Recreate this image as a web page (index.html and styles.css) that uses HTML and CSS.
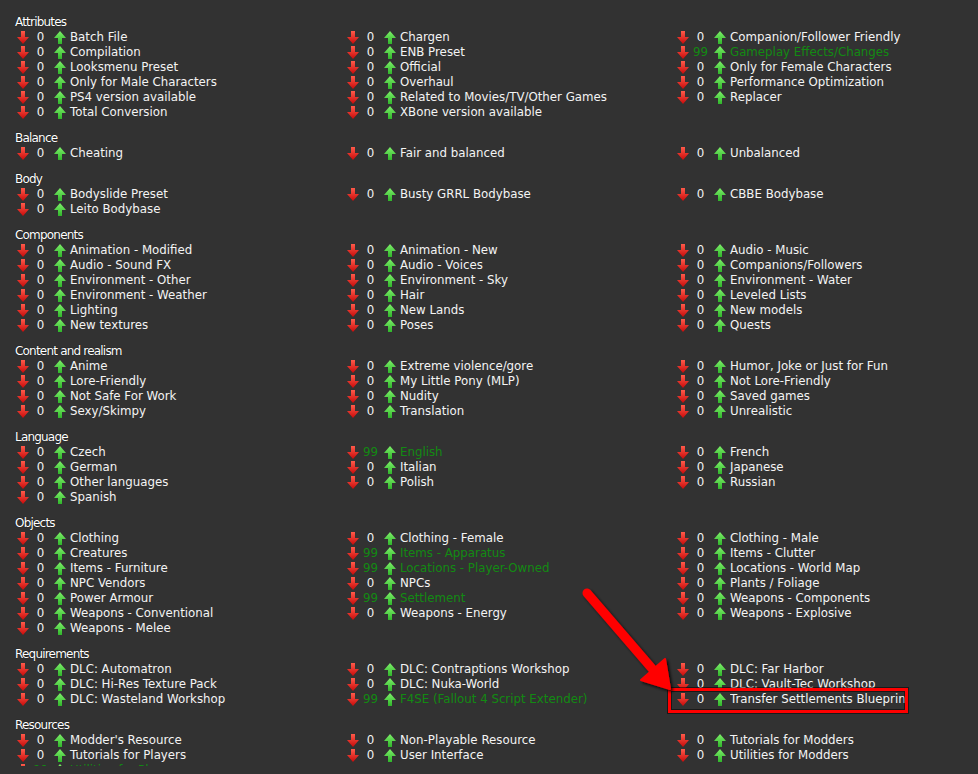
FILE: index.html
```html
<!DOCTYPE html>
<html>
<head>
<meta charset="utf-8">
<link rel="stylesheet" href="styles.css">
</head>
<body>
<svg class="defs" width="0" height="0">
  <defs>
    <linearGradient id="gd" x1="0" y1="0" x2="0" y2="1">
      <stop offset="0" stop-color="#ff5a4a"/>
      <stop offset="1" stop-color="#c80a0a"/>
    </linearGradient>
    <linearGradient id="gu" x1="0" y1="0" x2="0" y2="1">
      <stop offset="0" stop-color="#7ef06a"/>
      <stop offset="1" stop-color="#2fb52a"/>
    </linearGradient>
    <symbol id="down" viewBox="0 0 12 13">
      <path d="M4 0h4v6h4l-6 7l-6-7h4z" fill="url(#gd)"/>
    </symbol>
    <symbol id="up" viewBox="0 0 12 13">
      <path d="M6 0l6 7h-4v6h-4v-6h-4z" fill="url(#gu)"/>
    </symbol>
  </defs>
</svg>
<div class="page">

<section class="group">
  <h3 class="title">Attributes</h3>
  <div class="cols">
    <ul class="col">
      <li class="tag"><svg class="dn"><use href="#down"/></svg><span class="cnt">0</span><svg class="upi"><use href="#up"/></svg><span class="name">Batch File</span></li>
      <li class="tag"><svg class="dn"><use href="#down"/></svg><span class="cnt">0</span><svg class="upi"><use href="#up"/></svg><span class="name">Compilation</span></li>
      <li class="tag"><svg class="dn"><use href="#down"/></svg><span class="cnt">0</span><svg class="upi"><use href="#up"/></svg><span class="name">Looksmenu Preset</span></li>
      <li class="tag"><svg class="dn"><use href="#down"/></svg><span class="cnt">0</span><svg class="upi"><use href="#up"/></svg><span class="name">Only for Male Characters</span></li>
      <li class="tag"><svg class="dn"><use href="#down"/></svg><span class="cnt">0</span><svg class="upi"><use href="#up"/></svg><span class="name">PS4 version available</span></li>
      <li class="tag"><svg class="dn"><use href="#down"/></svg><span class="cnt">0</span><svg class="upi"><use href="#up"/></svg><span class="name">Total Conversion</span></li>
    </ul>
    <ul class="col">
      <li class="tag"><svg class="dn"><use href="#down"/></svg><span class="cnt">0</span><svg class="upi"><use href="#up"/></svg><span class="name">Chargen</span></li>
      <li class="tag"><svg class="dn"><use href="#down"/></svg><span class="cnt">0</span><svg class="upi"><use href="#up"/></svg><span class="name">ENB Preset</span></li>
      <li class="tag"><svg class="dn"><use href="#down"/></svg><span class="cnt">0</span><svg class="upi"><use href="#up"/></svg><span class="name">Official</span></li>
      <li class="tag"><svg class="dn"><use href="#down"/></svg><span class="cnt">0</span><svg class="upi"><use href="#up"/></svg><span class="name">Overhaul</span></li>
      <li class="tag"><svg class="dn"><use href="#down"/></svg><span class="cnt">0</span><svg class="upi"><use href="#up"/></svg><span class="name">Related to Movies/TV/Other Games</span></li>
      <li class="tag"><svg class="dn"><use href="#down"/></svg><span class="cnt">0</span><svg class="upi"><use href="#up"/></svg><span class="name">XBone version available</span></li>
    </ul>
    <ul class="col">
      <li class="tag"><svg class="dn"><use href="#down"/></svg><span class="cnt">0</span><svg class="upi"><use href="#up"/></svg><span class="name">Companion/Follower Friendly</span></li>
      <li class="tag on"><svg class="dn"><use href="#down"/></svg><span class="cnt">99</span><svg class="upi"><use href="#up"/></svg><span class="name">Gameplay Effects/Changes</span></li>
      <li class="tag"><svg class="dn"><use href="#down"/></svg><span class="cnt">0</span><svg class="upi"><use href="#up"/></svg><span class="name">Only for Female Characters</span></li>
      <li class="tag"><svg class="dn"><use href="#down"/></svg><span class="cnt">0</span><svg class="upi"><use href="#up"/></svg><span class="name">Performance Optimization</span></li>
      <li class="tag"><svg class="dn"><use href="#down"/></svg><span class="cnt">0</span><svg class="upi"><use href="#up"/></svg><span class="name">Replacer</span></li>
    </ul>
  </div>
</section>

<section class="group">
  <h3 class="title">Balance</h3>
  <div class="cols">
    <ul class="col">
      <li class="tag"><svg class="dn"><use href="#down"/></svg><span class="cnt">0</span><svg class="upi"><use href="#up"/></svg><span class="name">Cheating</span></li>
    </ul>
    <ul class="col">
      <li class="tag"><svg class="dn"><use href="#down"/></svg><span class="cnt">0</span><svg class="upi"><use href="#up"/></svg><span class="name">Fair and balanced</span></li>
    </ul>
    <ul class="col">
      <li class="tag"><svg class="dn"><use href="#down"/></svg><span class="cnt">0</span><svg class="upi"><use href="#up"/></svg><span class="name">Unbalanced</span></li>
    </ul>
  </div>
</section>

<section class="group">
  <h3 class="title">Body</h3>
  <div class="cols">
    <ul class="col">
      <li class="tag"><svg class="dn"><use href="#down"/></svg><span class="cnt">0</span><svg class="upi"><use href="#up"/></svg><span class="name">Bodyslide Preset</span></li>
      <li class="tag"><svg class="dn"><use href="#down"/></svg><span class="cnt">0</span><svg class="upi"><use href="#up"/></svg><span class="name">Leito Bodybase</span></li>
    </ul>
    <ul class="col">
      <li class="tag"><svg class="dn"><use href="#down"/></svg><span class="cnt">0</span><svg class="upi"><use href="#up"/></svg><span class="name">Busty GRRL Bodybase</span></li>
    </ul>
    <ul class="col">
      <li class="tag"><svg class="dn"><use href="#down"/></svg><span class="cnt">0</span><svg class="upi"><use href="#up"/></svg><span class="name">CBBE Bodybase</span></li>
    </ul>
  </div>
</section>

<section class="group">
  <h3 class="title">Components</h3>
  <div class="cols">
    <ul class="col">
      <li class="tag"><svg class="dn"><use href="#down"/></svg><span class="cnt">0</span><svg class="upi"><use href="#up"/></svg><span class="name">Animation - Modified</span></li>
      <li class="tag"><svg class="dn"><use href="#down"/></svg><span class="cnt">0</span><svg class="upi"><use href="#up"/></svg><span class="name">Audio - Sound FX</span></li>
      <li class="tag"><svg class="dn"><use href="#down"/></svg><span class="cnt">0</span><svg class="upi"><use href="#up"/></svg><span class="name">Environment - Other</span></li>
      <li class="tag"><svg class="dn"><use href="#down"/></svg><span class="cnt">0</span><svg class="upi"><use href="#up"/></svg><span class="name">Environment - Weather</span></li>
      <li class="tag"><svg class="dn"><use href="#down"/></svg><span class="cnt">0</span><svg class="upi"><use href="#up"/></svg><span class="name">Lighting</span></li>
      <li class="tag"><svg class="dn"><use href="#down"/></svg><span class="cnt">0</span><svg class="upi"><use href="#up"/></svg><span class="name">New textures</span></li>
    </ul>
    <ul class="col">
      <li class="tag"><svg class="dn"><use href="#down"/></svg><span class="cnt">0</span><svg class="upi"><use href="#up"/></svg><span class="name">Animation - New</span></li>
      <li class="tag"><svg class="dn"><use href="#down"/></svg><span class="cnt">0</span><svg class="upi"><use href="#up"/></svg><span class="name">Audio - Voices</span></li>
      <li class="tag"><svg class="dn"><use href="#down"/></svg><span class="cnt">0</span><svg class="upi"><use href="#up"/></svg><span class="name">Environment - Sky</span></li>
      <li class="tag"><svg class="dn"><use href="#down"/></svg><span class="cnt">0</span><svg class="upi"><use href="#up"/></svg><span class="name">Hair</span></li>
      <li class="tag"><svg class="dn"><use href="#down"/></svg><span class="cnt">0</span><svg class="upi"><use href="#up"/></svg><span class="name">New Lands</span></li>
      <li class="tag"><svg class="dn"><use href="#down"/></svg><span class="cnt">0</span><svg class="upi"><use href="#up"/></svg><span class="name">Poses</span></li>
    </ul>
    <ul class="col">
      <li class="tag"><svg class="dn"><use href="#down"/></svg><span class="cnt">0</span><svg class="upi"><use href="#up"/></svg><span class="name">Audio - Music</span></li>
      <li class="tag"><svg class="dn"><use href="#down"/></svg><span class="cnt">0</span><svg class="upi"><use href="#up"/></svg><span class="name">Companions/Followers</span></li>
      <li class="tag"><svg class="dn"><use href="#down"/></svg><span class="cnt">0</span><svg class="upi"><use href="#up"/></svg><span class="name">Environment - Water</span></li>
      <li class="tag"><svg class="dn"><use href="#down"/></svg><span class="cnt">0</span><svg class="upi"><use href="#up"/></svg><span class="name">Leveled Lists</span></li>
      <li class="tag"><svg class="dn"><use href="#down"/></svg><span class="cnt">0</span><svg class="upi"><use href="#up"/></svg><span class="name">New models</span></li>
      <li class="tag"><svg class="dn"><use href="#down"/></svg><span class="cnt">0</span><svg class="upi"><use href="#up"/></svg><span class="name">Quests</span></li>
    </ul>
  </div>
</section>

<section class="group">
  <h3 class="title">Content and realism</h3>
  <div class="cols">
    <ul class="col">
      <li class="tag"><svg class="dn"><use href="#down"/></svg><span class="cnt">0</span><svg class="upi"><use href="#up"/></svg><span class="name">Anime</span></li>
      <li class="tag"><svg class="dn"><use href="#down"/></svg><span class="cnt">0</span><svg class="upi"><use href="#up"/></svg><span class="name">Lore-Friendly</span></li>
      <li class="tag"><svg class="dn"><use href="#down"/></svg><span class="cnt">0</span><svg class="upi"><use href="#up"/></svg><span class="name">Not Safe For Work</span></li>
      <li class="tag"><svg class="dn"><use href="#down"/></svg><span class="cnt">0</span><svg class="upi"><use href="#up"/></svg><span class="name">Sexy/Skimpy</span></li>
    </ul>
    <ul class="col">
      <li class="tag"><svg class="dn"><use href="#down"/></svg><span class="cnt">0</span><svg class="upi"><use href="#up"/></svg><span class="name">Extreme violence/gore</span></li>
      <li class="tag"><svg class="dn"><use href="#down"/></svg><span class="cnt">0</span><svg class="upi"><use href="#up"/></svg><span class="name">My Little Pony (MLP)</span></li>
      <li class="tag"><svg class="dn"><use href="#down"/></svg><span class="cnt">0</span><svg class="upi"><use href="#up"/></svg><span class="name">Nudity</span></li>
      <li class="tag"><svg class="dn"><use href="#down"/></svg><span class="cnt">0</span><svg class="upi"><use href="#up"/></svg><span class="name">Translation</span></li>
    </ul>
    <ul class="col">
      <li class="tag"><svg class="dn"><use href="#down"/></svg><span class="cnt">0</span><svg class="upi"><use href="#up"/></svg><span class="name">Humor, Joke or Just for Fun</span></li>
      <li class="tag"><svg class="dn"><use href="#down"/></svg><span class="cnt">0</span><svg class="upi"><use href="#up"/></svg><span class="name">Not Lore-Friendly</span></li>
      <li class="tag"><svg class="dn"><use href="#down"/></svg><span class="cnt">0</span><svg class="upi"><use href="#up"/></svg><span class="name">Saved games</span></li>
      <li class="tag"><svg class="dn"><use href="#down"/></svg><span class="cnt">0</span><svg class="upi"><use href="#up"/></svg><span class="name">Unrealistic</span></li>
    </ul>
  </div>
</section>

<section class="group">
  <h3 class="title">Language</h3>
  <div class="cols">
    <ul class="col">
      <li class="tag"><svg class="dn"><use href="#down"/></svg><span class="cnt">0</span><svg class="upi"><use href="#up"/></svg><span class="name">Czech</span></li>
      <li class="tag"><svg class="dn"><use href="#down"/></svg><span class="cnt">0</span><svg class="upi"><use href="#up"/></svg><span class="name">German</span></li>
      <li class="tag"><svg class="dn"><use href="#down"/></svg><span class="cnt">0</span><svg class="upi"><use href="#up"/></svg><span class="name">Other languages</span></li>
      <li class="tag"><svg class="dn"><use href="#down"/></svg><span class="cnt">0</span><svg class="upi"><use href="#up"/></svg><span class="name">Spanish</span></li>
    </ul>
    <ul class="col">
      <li class="tag on"><svg class="dn"><use href="#down"/></svg><span class="cnt">99</span><svg class="upi"><use href="#up"/></svg><span class="name">English</span></li>
      <li class="tag"><svg class="dn"><use href="#down"/></svg><span class="cnt">0</span><svg class="upi"><use href="#up"/></svg><span class="name">Italian</span></li>
      <li class="tag"><svg class="dn"><use href="#down"/></svg><span class="cnt">0</span><svg class="upi"><use href="#up"/></svg><span class="name">Polish</span></li>
    </ul>
    <ul class="col">
      <li class="tag"><svg class="dn"><use href="#down"/></svg><span class="cnt">0</span><svg class="upi"><use href="#up"/></svg><span class="name">French</span></li>
      <li class="tag"><svg class="dn"><use href="#down"/></svg><span class="cnt">0</span><svg class="upi"><use href="#up"/></svg><span class="name">Japanese</span></li>
      <li class="tag"><svg class="dn"><use href="#down"/></svg><span class="cnt">0</span><svg class="upi"><use href="#up"/></svg><span class="name">Russian</span></li>
    </ul>
  </div>
</section>

<section class="group">
  <h3 class="title">Objects</h3>
  <div class="cols">
    <ul class="col">
      <li class="tag"><svg class="dn"><use href="#down"/></svg><span class="cnt">0</span><svg class="upi"><use href="#up"/></svg><span class="name">Clothing</span></li>
      <li class="tag"><svg class="dn"><use href="#down"/></svg><span class="cnt">0</span><svg class="upi"><use href="#up"/></svg><span class="name">Creatures</span></li>
      <li class="tag"><svg class="dn"><use href="#down"/></svg><span class="cnt">0</span><svg class="upi"><use href="#up"/></svg><span class="name">Items - Furniture</span></li>
      <li class="tag"><svg class="dn"><use href="#down"/></svg><span class="cnt">0</span><svg class="upi"><use href="#up"/></svg><span class="name">NPC Vendors</span></li>
      <li class="tag"><svg class="dn"><use href="#down"/></svg><span class="cnt">0</span><svg class="upi"><use href="#up"/></svg><span class="name">Power Armour</span></li>
      <li class="tag"><svg class="dn"><use href="#down"/></svg><span class="cnt">0</span><svg class="upi"><use href="#up"/></svg><span class="name">Weapons - Conventional</span></li>
      <li class="tag"><svg class="dn"><use href="#down"/></svg><span class="cnt">0</span><svg class="upi"><use href="#up"/></svg><span class="name">Weapons - Melee</span></li>
    </ul>
    <ul class="col">
      <li class="tag"><svg class="dn"><use href="#down"/></svg><span class="cnt">0</span><svg class="upi"><use href="#up"/></svg><span class="name">Clothing - Female</span></li>
      <li class="tag on"><svg class="dn"><use href="#down"/></svg><span class="cnt">99</span><svg class="upi"><use href="#up"/></svg><span class="name">Items - Apparatus</span></li>
      <li class="tag on"><svg class="dn"><use href="#down"/></svg><span class="cnt">99</span><svg class="upi"><use href="#up"/></svg><span class="name">Locations - Player-Owned</span></li>
      <li class="tag"><svg class="dn"><use href="#down"/></svg><span class="cnt">0</span><svg class="upi"><use href="#up"/></svg><span class="name">NPCs</span></li>
      <li class="tag on"><svg class="dn"><use href="#down"/></svg><span class="cnt">99</span><svg class="upi"><use href="#up"/></svg><span class="name">Settlement</span></li>
      <li class="tag"><svg class="dn"><use href="#down"/></svg><span class="cnt">0</span><svg class="upi"><use href="#up"/></svg><span class="name">Weapons - Energy</span></li>
    </ul>
    <ul class="col">
      <li class="tag"><svg class="dn"><use href="#down"/></svg><span class="cnt">0</span><svg class="upi"><use href="#up"/></svg><span class="name">Clothing - Male</span></li>
      <li class="tag"><svg class="dn"><use href="#down"/></svg><span class="cnt">0</span><svg class="upi"><use href="#up"/></svg><span class="name">Items - Clutter</span></li>
      <li class="tag"><svg class="dn"><use href="#down"/></svg><span class="cnt">0</span><svg class="upi"><use href="#up"/></svg><span class="name">Locations - World Map</span></li>
      <li class="tag"><svg class="dn"><use href="#down"/></svg><span class="cnt">0</span><svg class="upi"><use href="#up"/></svg><span class="name">Plants / Foliage</span></li>
      <li class="tag"><svg class="dn"><use href="#down"/></svg><span class="cnt">0</span><svg class="upi"><use href="#up"/></svg><span class="name">Weapons - Components</span></li>
      <li class="tag"><svg class="dn"><use href="#down"/></svg><span class="cnt">0</span><svg class="upi"><use href="#up"/></svg><span class="name">Weapons - Explosive</span></li>
    </ul>
  </div>
</section>

<section class="group">
  <h3 class="title">Requirements</h3>
  <div class="cols">
    <ul class="col">
      <li class="tag"><svg class="dn"><use href="#down"/></svg><span class="cnt">0</span><svg class="upi"><use href="#up"/></svg><span class="name">DLC: Automatron</span></li>
      <li class="tag"><svg class="dn"><use href="#down"/></svg><span class="cnt">0</span><svg class="upi"><use href="#up"/></svg><span class="name">DLC: Hi-Res Texture Pack</span></li>
      <li class="tag"><svg class="dn"><use href="#down"/></svg><span class="cnt">0</span><svg class="upi"><use href="#up"/></svg><span class="name">DLC: Wasteland Workshop</span></li>
    </ul>
    <ul class="col">
      <li class="tag"><svg class="dn"><use href="#down"/></svg><span class="cnt">0</span><svg class="upi"><use href="#up"/></svg><span class="name">DLC: Contraptions Workshop</span></li>
      <li class="tag"><svg class="dn"><use href="#down"/></svg><span class="cnt">0</span><svg class="upi"><use href="#up"/></svg><span class="name">DLC: Nuka-World</span></li>
      <li class="tag on"><svg class="dn"><use href="#down"/></svg><span class="cnt">99</span><svg class="upi"><use href="#up"/></svg><span class="name">F4SE (Fallout 4 Script Extender)</span></li>
    </ul>
    <ul class="col">
      <li class="tag"><svg class="dn"><use href="#down"/></svg><span class="cnt">0</span><svg class="upi"><use href="#up"/></svg><span class="name">DLC: Far Harbor</span></li>
      <li class="tag"><svg class="dn"><use href="#down"/></svg><span class="cnt">0</span><svg class="upi"><use href="#up"/></svg><span class="name">DLC: Vault-Tec Workshop</span></li>
      <li class="tag marked"><svg class="dn"><use href="#down"/></svg><span class="cnt">0</span><svg class="upi"><use href="#up"/></svg><span class="name">Transfer Settlements Blueprint</span><span class="markbox"></span></li>
    </ul>
  </div>
</section>

<section class="group">
  <h3 class="title">Resources</h3>
  <div class="cols">
    <ul class="col">
      <li class="tag"><svg class="dn"><use href="#down"/></svg><span class="cnt">0</span><svg class="upi"><use href="#up"/></svg><span class="name">Modder's Resource</span></li>
      <li class="tag"><svg class="dn"><use href="#down"/></svg><span class="cnt">0</span><svg class="upi"><use href="#up"/></svg><span class="name">Tutorials for Players</span></li>
      <li class="tag on"><svg class="dn"><use href="#down"/></svg><span class="cnt">99</span><svg class="upi"><use href="#up"/></svg><span class="name">Utilities for Players</span></li>
    </ul>
    <ul class="col">
      <li class="tag"><svg class="dn"><use href="#down"/></svg><span class="cnt">0</span><svg class="upi"><use href="#up"/></svg><span class="name">Non-Playable Resource</span></li>
      <li class="tag"><svg class="dn"><use href="#down"/></svg><span class="cnt">0</span><svg class="upi"><use href="#up"/></svg><span class="name">User Interface</span></li>
    </ul>
    <ul class="col">
      <li class="tag"><svg class="dn"><use href="#down"/></svg><span class="cnt">0</span><svg class="upi"><use href="#up"/></svg><span class="name">Tutorials for Modders</span></li>
      <li class="tag"><svg class="dn"><use href="#down"/></svg><span class="cnt">0</span><svg class="upi"><use href="#up"/></svg><span class="name">Utilities for Modders</span></li>
    </ul>
  </div>
</section>

</div>
<svg class="annot" width="978" height="774" viewBox="0 0 978 774">
  <defs>
    <filter id="sh" x="-20%" y="-20%" width="140%" height="140%">
      <feDropShadow dx="2" dy="2" stdDeviation="1.5" flood-color="#000" flood-opacity="0.8"/>
    </filter>
  </defs>
  <g filter="url(#sh)" fill="#ff0000" stroke="#ff0000">
    <line x1="587" y1="593" x2="655" y2="672" stroke-width="9" stroke-linecap="round"/>
    <polygon points="670,689 641,680 665,659" stroke-width="2" stroke-linejoin="round"/>
  </g>
</svg>
</body>
</html>
```

FILE: styles.css
```css
html, body {
  background: #323232;
}
body {
  margin: 8px;
  color: #f4f4f4;
  font-family: "DejaVu Sans", Verdana, sans-serif;
  font-size: 11.8px;
  overflow: hidden;
  height: 758px;
}
.defs {
  position: absolute;
  width: 0;
  height: 0;
}
.page {
  padding: 7px 0 0 7px;
}
.group {
  margin-bottom: 11px;
}
.title {
  margin: 0;
  font-size: 12px;
  font-weight: normal;
  letter-spacing: -0.8px;
  line-height: 15px;
  height: 15px;
  color: #ffffff;
  text-shadow: 0 0 1px #000;
}
.cols {
  display: grid;
  grid-template-columns: 330px 330px 300px;
}
.col {
  list-style: none;
  margin: 0;
  padding: 0;
}
.tag {
  display: flex;
  align-items: center;
  height: 15px;
  line-height: 15px;
  white-space: nowrap;
}
.dn {
  width: 12px;
  height: 13px;
  margin-left: 2px;
  flex: none;
}
.upi {
  width: 12px;
  height: 13px;
  margin-left: 2px;
  flex: none;
}
.cnt {
  width: 23px;
  text-align: center;
  flex: none;
}
.name {
  margin-left: 4px;
}
.on .cnt, .on .name {
  color: #128a12;
}
.marked {
  position: relative;
  width: 233px;
}
.marked .name {
  overflow: hidden;
}
.markbox {
  position: absolute;
  left: -7px;
  top: -4px;
  width: 234px;
  height: 19px;
  border: 3px solid #ff0000;
  box-shadow: 0 0 0 1px rgba(0,0,0,0.5), inset 0 0 0 1px rgba(0,0,0,0.5);
}
.annot {
  position: absolute;
  left: 0;
  top: 0;
  pointer-events: none;
}
```
